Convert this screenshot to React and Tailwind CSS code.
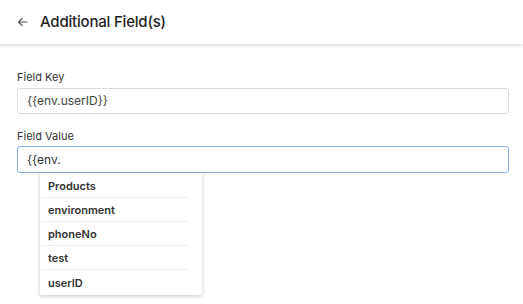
import React from 'react';

const options = ['Products', 'environment', 'phoneNo', 'test', 'userID'];

export default function App() {
  return (
    <div className="w-[523px] h-[304px] bg-white overflow-hidden" style={{ fontFamily: 'Inter, "Noto Sans", sans-serif' }}>
      <div className="h-[44px] flex items-center pl-[17px] gap-[12px] shadow-[0_2px_3px_rgba(0,0,0,0.12)] relative z-10">
        <svg width="11" height="10" viewBox="0 0 11 10" fill="none" stroke="#555" strokeWidth="1.1" strokeLinecap="round" strokeLinejoin="round">
          <path d="M10 5H1.5M5 1.5L1.5 5L5 8.5" />
        </svg>
        <span className="text-[15px] font-medium text-[#1f1f1f] tracking-[-0.2px]">Additional Field(s)</span>
      </div>

      <div className="px-[17px] pr-[14px] pt-[26px]">
        <div className="text-[11px] leading-[14px] text-[#333] mb-[4px]">Field Key</div>
        <div className="h-[26px] border border-[#dcdcdc] rounded-[3px] flex items-center px-[9px] text-[12px] text-[#444]">
          {'{{env.userID}}'}
        </div>

        <div className="text-[11px] leading-[14px] text-[#333] mt-[15px] mb-[3px]">Field Value</div>
        <div className="relative">
          <div className="h-[27px] border border-[#8ab0ea] rounded-[3px] flex items-center px-[9px] text-[12px] text-[#333]">
            {'{{env.'}
          </div>
          <div className="absolute left-[23px] top-[27px] w-[162px] bg-white shadow-[0_1px_4px_rgba(0,0,0,0.22)] pt-[1px] pb-[1px]">
            {options.map((o, i) => (
              <div key={o} className={`h-[24px] mx-[1px] mr-[14px] flex items-center pl-[7px] pt-[2px] text-[11px] font-semibold text-[#333] ${i < options.length - 1 ? 'border-b border-[#eeeeee]' : ''}`}>
                {o}
              </div>
            ))}
          </div>
        </div>
      </div>
    </div>
  );
}
